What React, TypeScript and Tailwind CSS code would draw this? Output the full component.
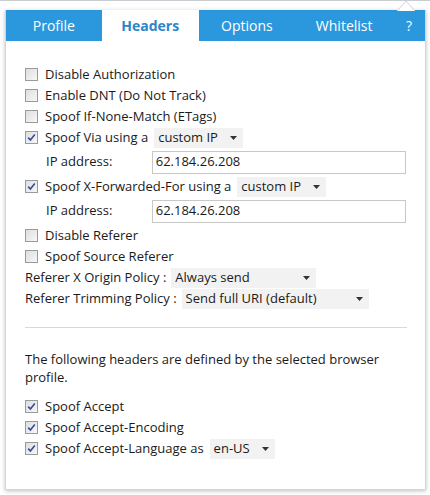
import React from 'react';

const Box: React.FC<{ checked?: boolean }> = ({ checked }) => (
  <span className="inline-flex w-[13px] h-[13px] shrink-0 items-center justify-center border border-[#999a9a] bg-gradient-to-br from-[#dedede] to-[#f7f7f7]">
    {checked && (
      <svg width="9" height="9" viewBox="0 0 9 9">
        <path d="M1.2 4.6 L3.4 7 L7.8 1.4" fill="none" stroke="#3a4a9a" strokeWidth="1.6" />
      </svg>
    )}
  </span>
);

const Caret = () => (
  <svg width="7" height="4" viewBox="0 0 7 4" className="shrink-0">
    <path d="M0 0 H7 L3.5 4 Z" fill="#333" />
  </svg>
);

const Select: React.FC<{ label: string; w: string }> = ({ label, w }) => (
  <span className={`inline-flex h-[20px] items-center justify-between bg-[#f2f2f2] pl-[4px] pr-[6px] ${w}`}>
    <span>{label}</span>
    <Caret />
  </span>
);

const Check: React.FC<{ checked?: boolean; children: React.ReactNode }> = ({ checked, children }) => (
  <div className="flex h-[21px] items-center gap-[7px]">
    <Box checked={checked} />
    <span className="flex items-center gap-[6px]">{children}</span>
  </div>
);

const IpRow = () => (
  <div className="flex h-[28px] items-center pl-[21px]">
    <span className="w-[106px]">IP address:</span>
    <div className="flex h-[23px] w-[255px] items-center border border-[#c8c8c8] pl-[3px]">62.184.26.208</div>
  </div>
);

export default function App() {
  const tabs = ['Profile', 'Headers', 'Options', 'Whitelist', '?'];
  const widths = ['w-[96px]', 'w-[97px]', 'w-[97px]', 'w-[98px]', 'w-[32px]'];
  return (
    <div className="relative h-[495px] w-[430px] overflow-hidden bg-white text-[13px] text-[#1a1a1a]" style={{ fontFamily: '"Open Sans", "Noto Sans", sans-serif' }}>
      <div className="absolute left-0 top-0 h-px w-full bg-[#c9cdd2]" />
      <div className="ml-[5px] mt-[10px] h-[480px] w-[421px] border-x border-b border-[#d6d6d6] shadow-[0_1px_4px_rgba(0,0,0,0.25)]">
        <div className="flex h-[31px] bg-[#2b98dd] text-[14px] text-white">
          {tabs.map((t, i) => (
            <div
              key={t}
              className={`flex items-center justify-center ${widths[i]} ${t === 'Headers' ? 'bg-white font-bold text-[#2b86c9]' : ''}`}
            >
              {t}
            </div>
          ))}
        </div>
        <div className="px-[19px] pt-[23px]">
          <Check>Disable Authorization</Check>
          <Check>Enable DNT (Do Not Track)</Check>
          <Check>Spoof If-None-Match (ETags)</Check>
          <Check checked>
            Spoof Via using a <Select label="custom IP" w="w-[89px]" />
          </Check>
          <IpRow />
          <Check checked>
            Spoof X-Forwarded-For using a <Select label="custom IP" w="w-[89px]" />
          </Check>
          <IpRow />
          <Check>Disable Referer</Check>
          <Check>Spoof Source Referer</Check>
          <div className="flex h-[21px] items-center gap-[5px]">
            Referer X Origin Policy : <Select label="Always send" w="w-[145px]" />
          </div>
          <div className="flex h-[21px] items-center gap-[5px]">
            Referer Trimming Policy : <Select label="Send full URI (default)" w="w-[187px]" />
          </div>
          <div className="mt-[18px] h-px w-[382px] bg-[#d8d8d8]" />
          <p className="mt-[22px] w-[382px] leading-[18px]">
            The following headers are defined by the selected browser profile.
          </p>
          <div className="mt-[10px]">
            <Check checked>Spoof Accept</Check>
            <Check checked>Spoof Accept-Encoding</Check>
            <Check checked>
              Spoof Accept-Language as <Select label="en-US" w="w-[65px]" />
            </Check>
          </div>
        </div>
      </div>
      <svg width="18" height="11" viewBox="0 0 18 11" className="absolute left-[397px] top-0">
        <path d="M0 11 L9 1 L18 11 Z" fill="#fff" />
        <path d="M0 11 L9 1 L18 11" fill="none" stroke="#d0d3d6" strokeWidth="1" />
      </svg>
    </div>
  );
}
